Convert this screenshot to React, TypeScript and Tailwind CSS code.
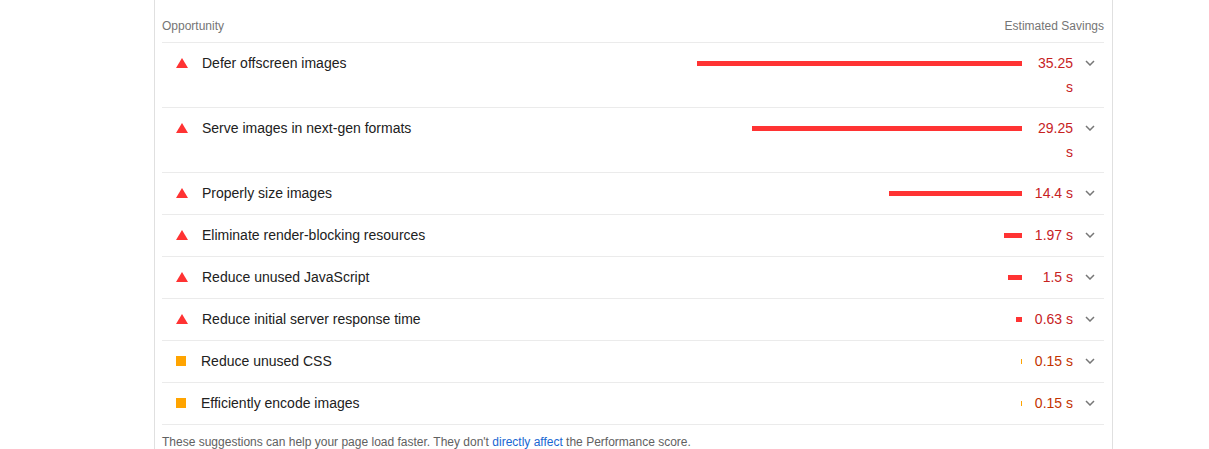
type Audit = {
  title: string;
  savings: number;
  label: string;
  level: "fail" | "average";
};

const audits: Audit[] = [
  { title: "Defer offscreen images", savings: 35.25, label: "35.25 s", level: "fail" },
  { title: "Serve images in next-gen formats", savings: 29.25, label: "29.25 s", level: "fail" },
  { title: "Properly size images", savings: 14.4, label: "14.4 s", level: "fail" },
  { title: "Eliminate render-blocking resources", savings: 1.97, label: "1.97 s", level: "fail" },
  { title: "Reduce unused JavaScript", savings: 1.5, label: "1.5 s", level: "fail" },
  { title: "Reduce initial server response time", savings: 0.63, label: "0.63 s", level: "fail" },
  { title: "Reduce unused CSS", savings: 0.15, label: "0.15 s", level: "average" },
  { title: "Efficiently encode images", savings: 0.15, label: "0.15 s", level: "average" },
];

// px per second of savings, taken from the longest bar
const SCALE = 325 / 35.25;

const AuditIcon = ({ level }: { level: Audit["level"] }) =>
  level === "fail" ? (
    <div className="w-3 mr-[14px] h-6 flex items-center shrink-0">
      <svg width="12" height="10" viewBox="0 0 12 10">
        <polygon points="6,0 12,10 0,10" fill="#f33" />
      </svg>
    </div>
  ) : (
    <div className="w-[10px] mr-[15px] h-6 flex items-center shrink-0">
      <div className="w-[10px] h-[10px] bg-[#ffa400]" />
    </div>
  );

const Chevron = () => (
  <svg width="10" height="6" viewBox="0 0 10 6" fill="none">
    <polyline points="1,1 5,5 9,1" stroke="#777" strokeWidth="1.5" />
  </svg>
);

const App = () => {
  return (
    <div className="w-[1209px] h-[449px] bg-white overflow-hidden font-['Liberation_Sans',Arial,sans-serif]">
      <div className="ml-[154px] w-[959px] min-h-[449px] border-x border-[#e0e0e0] pl-[7px] pr-[8px]">
        {/* Header */}
        <div className="flex justify-between items-center pt-[18px] pb-2 border-b border-[#ebebeb] text-xs leading-4 text-[#757575]">
          <span>Opportunity</span>
          <span>Estimated Savings</span>
        </div>

        {/* Rows */}
        {audits.map((item, index) => {
          const isFail = item.level === "fail";
          const width = Math.max(1, Math.round(item.savings * SCALE));
          return (
            <div
              key={index}
              className="flex items-start min-h-[42px] py-2 border-b border-[#ebebeb] text-sm leading-6"
            >
              <div className="pl-[14px] flex items-start flex-1">
                <AuditIcon level={item.level} />
                <span className="text-[#212121]">{item.title}</span>
              </div>

              <div className="flex items-start">
                <div className="h-6 flex items-center justify-end mr-[7px]">
                  <div
                    className={isFail ? "h-[5px] bg-[#f33]" : "h-[5px] bg-[#ffa400]"}
                    style={{ width }}
                  />
                </div>
                <div
                  className={
                    isFail
                      ? "w-[44px] text-right text-[#c7221f]"
                      : "w-[44px] text-right text-[#c33300]"
                  }
                >
                  {item.label}
                </div>
                <div className="h-6 pl-[12px] pr-[9px] flex items-center">
                  <Chevron />
                </div>
              </div>
            </div>
          );
        })}

        {/* Footer */}
        <p className="pt-[9px] text-xs leading-4 text-[#616161]">
          These suggestions can help your page load faster. They don't{" "}
          <span className="text-[#1967d2]">directly affect</span> the Performance score.
        </p>
      </div>
    </div>
  );
};

export default App;
